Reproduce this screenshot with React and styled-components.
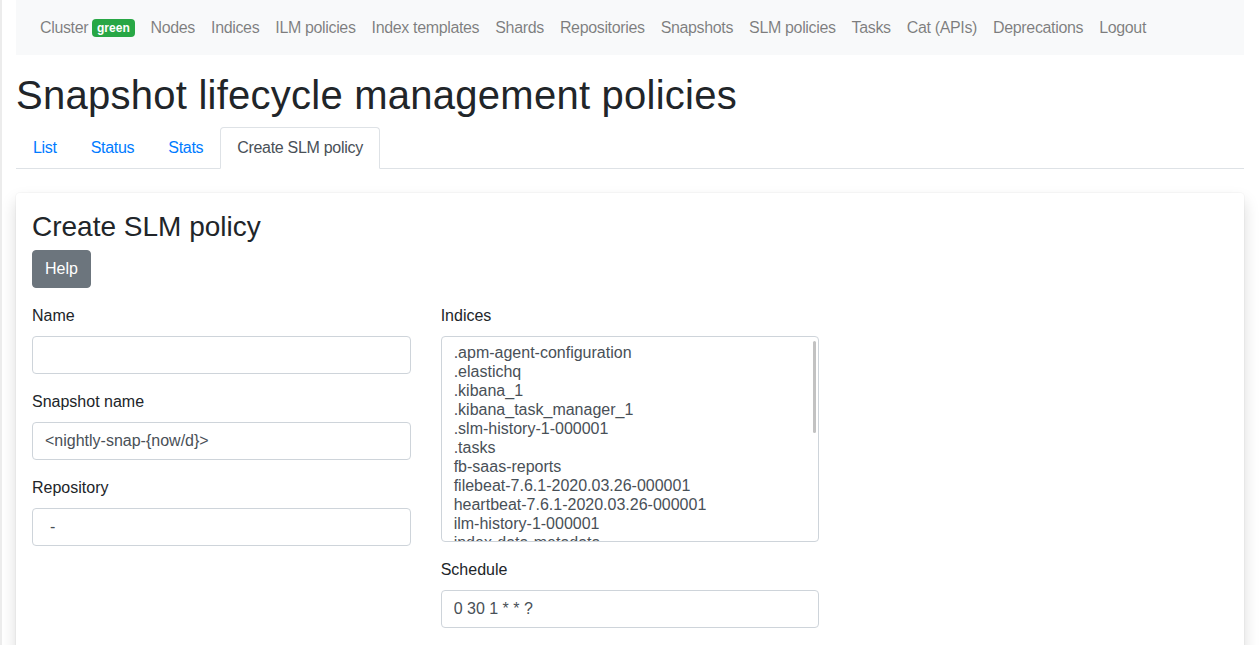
import React from "react";
import styled, { createGlobalStyle } from "styled-components";

const Global = createGlobalStyle`
  html, body { margin: 0; padding: 0; background: #fff; }
  body {
    border-left: 2px solid #ececec;
    font-family: "Liberation Sans", Arial, sans-serif;
    font-size: 16px;
    line-height: 1.5;
    color: #212529;
  }
  * { box-sizing: border-box; }
`;

const Page = styled.div`
  padding: 0 15px 40px 14px;
`;

const Navbar = styled.nav`
  display: flex;
  align-items: center;
  height: 55px;
  padding: 8px 16px;
  background: #f8f9fa;
`;

const NavLink = styled.a`
  display: flex;
  align-items: center;
  gap: 4px;
  padding: 8px;
  color: rgba(0, 0, 0, 0.5);
  text-decoration: none;
  white-space: nowrap;
  letter-spacing: -0.35px;
`;

const Badge = styled.span`
  display: inline-block;
  padding: 3px 4.8px;
  font-size: 12px;
  font-weight: 700;
  line-height: 1;
  letter-spacing: 0;
  color: #fff;
  background: #28a745;
  border-radius: 4px;
`;

const Title = styled.h1`
  margin: 16px 0 8px;
  font-size: 40px;
  font-weight: 500;
  line-height: 1.2;
  letter-spacing: 0.25px;
`;

const Tabs = styled.ul`
  display: flex;
  list-style: none;
  margin: 0;
  padding: 0;
  border-bottom: 1px solid #dee2e6;
`;

const Tab = styled.li`
  margin-bottom: -1px;
  padding: 8px 16px;
  letter-spacing: -0.3px;
  border: 1px solid ${(p) => (p.$active ? "#dee2e6" : "transparent")};
  border-bottom-color: ${(p) => (p.$active ? "#fff" : "transparent")};
  border-radius: 4px 4px 0 0;
  background: ${(p) => (p.$active ? "#fff" : "transparent")};
  color: ${(p) => (p.$active ? "#495057" : "#007bff")};
  cursor: pointer;
`;

const Card = styled.section`
  margin-top: 24px;
  padding: 17px 16px 16px;
  background: #fff;
  border-radius: 4px;
  box-shadow: 0 0 0 1px rgba(0, 0, 0, 0.025), 0 8px 16px rgba(0, 0, 0, 0.15);
`;

const CardTitle = styled.h3`
  margin: 0 0 6px;
  font-size: 28px;
  font-weight: 500;
  line-height: 1.2;
`;

const Button = styled.button`
  display: block;
  height: 38px;
  padding: 6px 12px;
  margin-bottom: 16px;
  font-family: inherit;
  font-size: 16px;
  line-height: 1.5;
  color: #fff;
  background: #6c757d;
  border: 1px solid #6c757d;
  border-radius: 4px;
`;

const Row = styled.div`
  display: grid;
  grid-template-columns: repeat(3, 1fr);
  column-gap: 30px;
`;

const Col = styled.div`
  display: flex;
  flex-direction: column;
`;

const Group = styled.div`
  margin-bottom: 16px;
`;

const Label = styled.label`
  display: block;
  margin-bottom: 8px;
  line-height: 24px;
`;

const Input = styled.input`
  display: block;
  width: 100%;
  height: 38px;
  padding: 6px 12px;
  font-family: inherit;
  font-size: 16px;
  line-height: 1.5;
  color: #495057;
  background: #fff;
  border: 1px solid #ced4da;
  border-radius: 4px;
  outline: none;
`;

const Select = styled.div`
  height: 38px;
  padding: 6px 12px 6px 17px;
  color: #495057;
  border: 1px solid #ced4da;
  border-radius: 4px;
`;

const ListBox = styled.div`
  position: relative;
  height: 206px;
  padding: 6px 12px;
  overflow: hidden;
  border: 1px solid #ced4da;
  border-radius: 4px;
  color: #495057;
`;

const Option = styled.div`
  height: 19px;
  line-height: 19px;
  white-space: nowrap;
`;

const Thumb = styled.div`
  position: absolute;
  top: 4px;
  right: 2px;
  width: 3px;
  height: 92px;
  border-radius: 2px;
  background: #c2c2c2;
`;

const navItems = [
  "Nodes",
  "Indices",
  "ILM policies",
  "Index templates",
  "Shards",
  "Repositories",
  "Snapshots",
  "SLM policies",
  "Tasks",
  "Cat (APIs)",
  "Deprecations",
  "Logout",
];

const indices = [
  ".apm-agent-configuration",
  ".elastichq",
  ".kibana_1",
  ".kibana_task_manager_1",
  ".slm-history-1-000001",
  ".tasks",
  "fb-saas-reports",
  "filebeat-7.6.1-2020.03.26-000001",
  "heartbeat-7.6.1-2020.03.26-000001",
  "ilm-history-1-000001",
  "index-data-metadata",
  "metricbeat-7.6.1-2020.03.26-000001",
];

export default function App() {
  return (
    <Page>
      <Global />
      <Navbar>
        <NavLink>
          Cluster <Badge>green</Badge>
        </NavLink>
        {navItems.map((n) => (
          <NavLink key={n}>{n}</NavLink>
        ))}
      </Navbar>
      <Title>Snapshot lifecycle management policies</Title>
      <Tabs>
        <Tab>List</Tab>
        <Tab>Status</Tab>
        <Tab>Stats</Tab>
        <Tab $active>Create SLM policy</Tab>
      </Tabs>
      <Card>
        <CardTitle>Create SLM policy</CardTitle>
        <Button>Help</Button>
        <Row>
          <Col>
            <Group>
              <Label>Name</Label>
              <Input defaultValue="" />
            </Group>
            <Group>
              <Label>Snapshot name</Label>
              <Input defaultValue="<nightly-snap-{now/d}>" />
            </Group>
            <Group>
              <Label>Repository</Label>
              <Select>-</Select>
            </Group>
          </Col>
          <Col>
            <Group>
              <Label>Indices</Label>
              <ListBox>
                {indices.map((i) => (
                  <Option key={i}>{i}</Option>
                ))}
                <Thumb />
              </ListBox>
            </Group>
            <Group>
              <Label>Schedule</Label>
              <Input defaultValue="0 30 1 * * ?" />
            </Group>
          </Col>
          <Col />
        </Row>
      </Card>
    </Page>
  );
}
